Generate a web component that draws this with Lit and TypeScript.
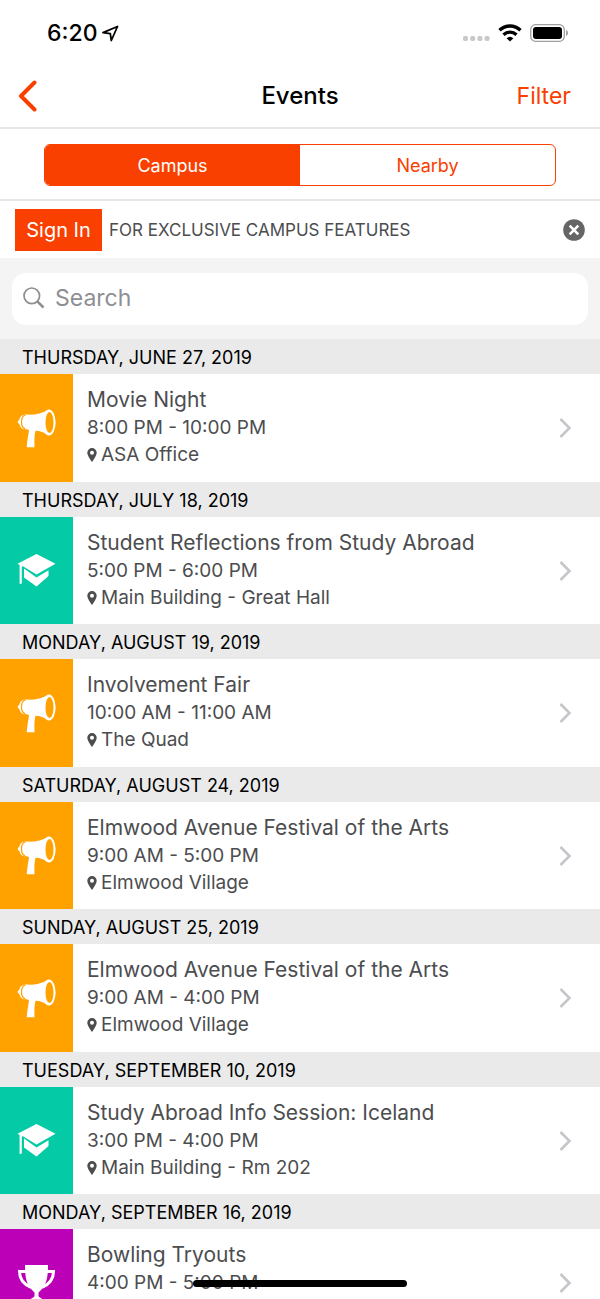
import { LitElement, html, css, svg, nothing } from "lit";
import { customElement, property, state } from "lit/decorators.js";
import { classMap } from "lit/directives/class-map.js";

type Kind = "social" | "learning" | "sports";

interface CampusEvent {
  day: string;
  title: string;
  time: string;
  place?: string;
  kind: Kind;
}

const EVENTS: CampusEvent[] = [
  { day: "THURSDAY, JUNE 27, 2019", title: "Movie Night", time: "8:00 PM - 10:00 PM", place: "ASA Office", kind: "social" },
  { day: "THURSDAY, JULY 18, 2019", title: "Student Reflections from Study Abroad", time: "5:00 PM - 6:00 PM", place: "Main Building - Great Hall", kind: "learning" },
  { day: "MONDAY, AUGUST 19, 2019", title: "Involvement Fair", time: "10:00 AM - 11:00 AM", place: "The Quad", kind: "social" },
  { day: "SATURDAY, AUGUST 24, 2019", title: "Elmwood Avenue Festival of the Arts", time: "9:00 AM - 5:00 PM", place: "Elmwood Village", kind: "social" },
  { day: "SUNDAY, AUGUST 25, 2019", title: "Elmwood Avenue Festival of the Arts", time: "9:00 AM - 4:00 PM", place: "Elmwood Village", kind: "social" },
  { day: "TUESDAY, SEPTEMBER 10, 2019", title: "Study Abroad Info Session: Iceland", time: "3:00 PM - 4:00 PM", place: "Main Building - Rm 202", kind: "learning" },
  { day: "MONDAY, SEPTEMBER 16, 2019", title: "Bowling Tryouts", time: "4:00 PM - 5:00 PM", kind: "sports" },
];

const GLYPHS = {
  social: svg`
    <path d="M8.500 5.600 C4.500 5.600 3 8.500 2.600 10 L.5 13 L2.600 15.800 C3.200 18.500 5 20.300 8 20.300 Z"/>
    <path d="M7.200 6.500 C5.600 7.500 5 10.300 5 13 C5 15.700 5.600 18.500 7 19.500 L12 21 C11.500 26 10 32 9.700 38.300 H17.500 C17.300 32 17.300 26 18.500 21.800 C23 21.800 27 23.500 31 26 V1 C25 4.500 17 6.200 10 5.600 C9 5.600 8 5.900 7.200 6.500 Z"/>
    <path class="gap" d="M8.300 6.200 C3.300 7 3.300 18.600 8 19.700"/>
    <ellipse cx="31.900" cy="13.500" rx="6.700" ry="13"/>
    <ellipse class="hole" cx="32.500" cy="13.500" rx="4" ry="10.500"/>`,
  learning: svg`
    <path d="M19.500 3 L38.500 12.800 L19.500 23.500 L5.500 15 L4.800 16 V32.500 L2.600 33 V14 L.5 12.700 Z"/>
    <path d="M7 17.500 L19.500 26.500 L31.500 19.200 V25 L19.500 35.500 L7 26.500 Z"/>`,
  sports: svg`
    <path d="M8 1 H31 C31 12 30 20 24 26 L21.500 28.500 V32 C22 34 26 34 26 37 H13 C13 34 17 34 17.500 32 V28.500 L15 26 C9 20 8 12 8 1 Z"/>
    <path class="handle" d="M9 7.500 H2.500 C2.500 15 6 20 14 23.500 M30 7.500 H36.500 C36.500 15 33 20 25 23.500"/>`,
};

@customElement("event-row")
class EventRow extends LitElement {
  @property({ attribute: false }) event!: CampusEvent;

  static styles = css`
    :host { display: grid; }
    .row {
      display: grid;
      grid-template-columns: 73px 1fr auto;
      align-items: stretch;
      background: #fff;
      color: #4c4d4f;
      text-decoration: none;
    }
    .tile { display: grid; place-items: center; }
    .tile svg { width: 39px; height: 39px; fill: #fff; }
    .social { background: #ffa200; --tile: #ffa200; }
    .learning { background: #04cba6; --tile: #04cba6; }
    .sports { background: #bb00b8; --tile: #bb00b8; }
    .hole { fill: var(--tile); }
    .tile .gap { fill: none; stroke: var(--tile); stroke-width: 1.2px; }
    .tile .handle { fill: none; stroke: #fff; stroke-width: 3px; }
    .info { padding: 11px 14px 0; min-width: 0; }
    .title { margin: 0; font-size: 21px; font-weight: 400; line-height: 29px; }
    .detail { margin: 0; font-size: 19px; line-height: 27px; display: flex; align-items: center; gap: 4px; }
    .pin { width: 10px; height: 14px; fill: #4c4d4f; }
    .chevron { align-self: center; width: 14px; height: 22px; margin-right: 28px; fill: none; stroke: #c5c5ca; stroke-width: 2.5px; }
  `;

  render() {
    const e = this.event;
    return html`
      <a class="row" href="#event">
        <span class=${classMap({ tile: true, [e.kind]: true })}>
          <svg viewBox="0 0 39 39" aria-hidden="true">${GLYPHS[e.kind]}</svg>
        </span>
        <div class="info">
          <h3 class="title">${e.title}</h3>
          <p class="detail">${e.time}</p>
          ${e.place
            ? html`<p class="detail">
                <svg class="pin" viewBox="0 0 10 14" aria-hidden="true">
                  <path fill-rule="evenodd" d="M5 0 A4.700 4.700 0 0 1 9.700 4.700 C9.700 7 7 11 5 14 C3 11 .3 7 .3 4.700 A4.700 4.700 0 0 1 5 0 Z M5 2.700 A2 2 0 1 0 5 6.700 A2 2 0 1 0 5 2.700 Z"/>
                </svg>
                ${e.place}
              </p>`
            : nothing}
        </div>
        <svg class="chevron" viewBox="0 0 14 22" aria-hidden="true"><path d="M2.500 2 L11.500 11 L2.500 20"/></svg>
      </a>`;
  }
}

@customElement("app-root")
class AppRoot extends LitElement {
  @state() private tab: "Campus" | "Nearby" = "Campus";

  static styles = css`
    :host {
      --accent: #f94000;
      --line: #e6e6e6;
      display: flex;
      flex-direction: column;
      height: 100vh;
      overflow: hidden;
      position: relative;
      background: #fff;
      color: #000;
      font-family: Inter, "Liberation Sans", sans-serif;
    }
    button { font: inherit; border: 0; padding: 0; margin: 0; background: none; cursor: pointer; }
    .status { display: flex; align-items: center; justify-content: space-between; height: 66px; padding: 0 31px 0 47px; }
    .clock { display: flex; align-items: center; gap: 5px; font-size: 23px; font-weight: 500; line-height: 28px; }
    .clock svg { width: 17px; height: 17px; fill: none; stroke: #000; stroke-width: 1.8px; stroke-linejoin: round; }
    .signals { display: flex; align-items: center; gap: 8px; }
    .cell { width: 28px; height: 18px; fill: #c9c9cb; }
    .wifi { width: 24px; height: 18px; }
    .battery { width: 39px; height: 18px; }
    .nav {
      display: grid;
      grid-template-columns: 1fr auto 1fr;
      align-items: center;
      height: 59px;
      padding-bottom: 2px;
      border-bottom: 2px solid var(--line);
    }
    .back { justify-self: start; display: grid; padding-left: 18px; }
    .back svg { width: 20px; height: 32px; fill: none; stroke: var(--accent); stroke-width: 4px; stroke-linecap: round; stroke-linejoin: round; }
    .heading { margin: 0; font-size: 24px; font-weight: 500; line-height: 30px; }
    .filter { justify-self: end; padding-right: 29px; font-size: 23px; line-height: 30px; color: var(--accent); }
    .tabs { padding: 15px 44px 13px; border-bottom: 2px solid var(--line); }
    .segments {
      display: grid;
      grid-template-columns: 1fr 1fr;
      height: 42px;
      box-sizing: border-box;
      border: 1px solid var(--accent);
      border-radius: 6px;
      overflow: hidden;
    }
    .segment { font-size: 18px; color: var(--accent); }
    .selected { background: var(--accent); color: #fff; }
    .promo { display: flex; align-items: center; gap: 7px; height: 57px; padding: 0 15px; }
    .signin { width: 87px; height: 42px; background: var(--accent); color: #fff; font-size: 20px; }
    .pitch { flex: 1; font-size: 17px; color: #4c4d4f; }
    .close { display: grid; }
    .close svg { width: 22px; height: 22px; }
    .searchbar { padding: 15px 12px 14px; background: #f4f4f4; }
    .field { display: flex; align-items: center; gap: 10px; height: 50px; padding: 0 11px 2px; border-radius: 14px; background: #fff; }
    .field svg { width: 22px; height: 22px; fill: none; stroke: #8e8e93; }
    .input { flex: 1; min-width: 0; border: 0; outline: 0; padding: 0; background: none; font: inherit; font-size: 23px; color: #000; }
    .input::placeholder { color: #8e8e93; opacity: 1; }
    .list { flex: 1; min-height: 0; overflow-y: auto; scrollbar-width: none; }
    .day { margin: 0; padding: 2px 22px 0; font-size: 18px; font-weight: 400; line-height: 33px; background: #eaeaea; }
    .entry { height: 107px; }
    .group:nth-child(odd) .entry { height: 108px; }
    .home { position: absolute; left: 50%; bottom: 12px; width: 214px; height: 7px; margin-left: -107px; border-radius: 4px; background: #000; }
  `;

  private segment(name: "Campus" | "Nearby") {
    const on = this.tab === name;
    return html`<button class=${classMap({ segment: true, selected: on })} aria-pressed=${on} @click=${() => (this.tab = name)}>${name}</button>`;
  }

  render() {
    return html`
      <div class="status">
        <div class="clock">
          6:20
          <svg viewBox="0 0 17 17" aria-hidden="true"><path d="M15.500 1.500 L1 7.700 L8.300 8.700 L9.300 15.500 Z"/></svg>
        </div>
        <div class="signals">
          <svg class="cell" viewBox="0 0 28 18" aria-hidden="true">
            <rect x="1" y="12" width="5" height="5" rx="1.800"/><rect x="8.200" y="12" width="5" height="5" rx="1.800"/>
            <rect x="15.400" y="12" width="5" height="5" rx="1.800"/><rect x="22.600" y="12" width="5" height="5" rx="1.800"/>
          </svg>
          <svg class="wifi" viewBox="0 0 24 18" aria-hidden="true">
            <g fill="none" stroke="#000" stroke-width="3.300"><path d="M1.500 6.300 A15 15 0 0 1 22.500 6.300"/><path d="M5.500 10.700 A9.500 9.500 0 0 1 18.500 10.700"/></g>
            <path d="M12 17.500 L8.600 14.300 A5 5 0 0 1 15.400 14.300 Z"/>
          </svg>
          <svg class="battery" viewBox="0 0 39 18" aria-hidden="true">
            <rect x=".7" y=".7" width="33.600" height="16.600" rx="4.800" fill="none" stroke="#a0a0a0" stroke-width="1.300"/>
            <rect x="3" y="3" width="29" height="12" rx="3"/>
            <path d="M36 6 C38.700 7 38.700 11 36 12 Z" fill="#a0a0a0"/>
          </svg>
        </div>
      </div>
      <header class="nav">
        <button class="back" aria-label="Back"><svg viewBox="0 0 20 32" aria-hidden="true"><path d="M16.500 2.500 L3 16 L16.500 29.500"/></svg></button>
        <h1 class="heading">Events</h1>
        <button class="filter">Filter</button>
      </header>
      <div class="tabs"><div class="segments">${this.segment("Campus")}${this.segment("Nearby")}</div></div>
      <div class="promo">
        <button class="signin">Sign In</button>
        <span class="pitch">FOR EXCLUSIVE CAMPUS FEATURES</span>
        <button class="close" aria-label="Dismiss">
          <svg viewBox="0 0 22 22" aria-hidden="true"><circle cx="11" cy="11" r="10.800" fill="#666"/><path d="M6.700 6.700 L15.300 15.300 M15.300 6.700 L6.700 15.300" stroke="#fff" stroke-width="2.600"/></svg>
        </button>
      </div>
      <div class="searchbar">
        <label class="field">
          <svg viewBox="0 0 22 22" aria-hidden="true"><circle cx="8.800" cy="8.800" r="7.800" stroke-width="1.700"/><path d="M14.300 14.300 L20.500 20.500" stroke-width="2.500"/></svg>
          <input class="input" type="search" placeholder="Search" aria-label="Search" />
        </label>
      </div>
      <main class="list">
        ${EVENTS.map((e) => html`<section class="group"><h2 class="day">${e.day}</h2><event-row class="entry" .event=${e}></event-row></section>`)}
      </main>
      <div class="home"></div>`;
  }
}
